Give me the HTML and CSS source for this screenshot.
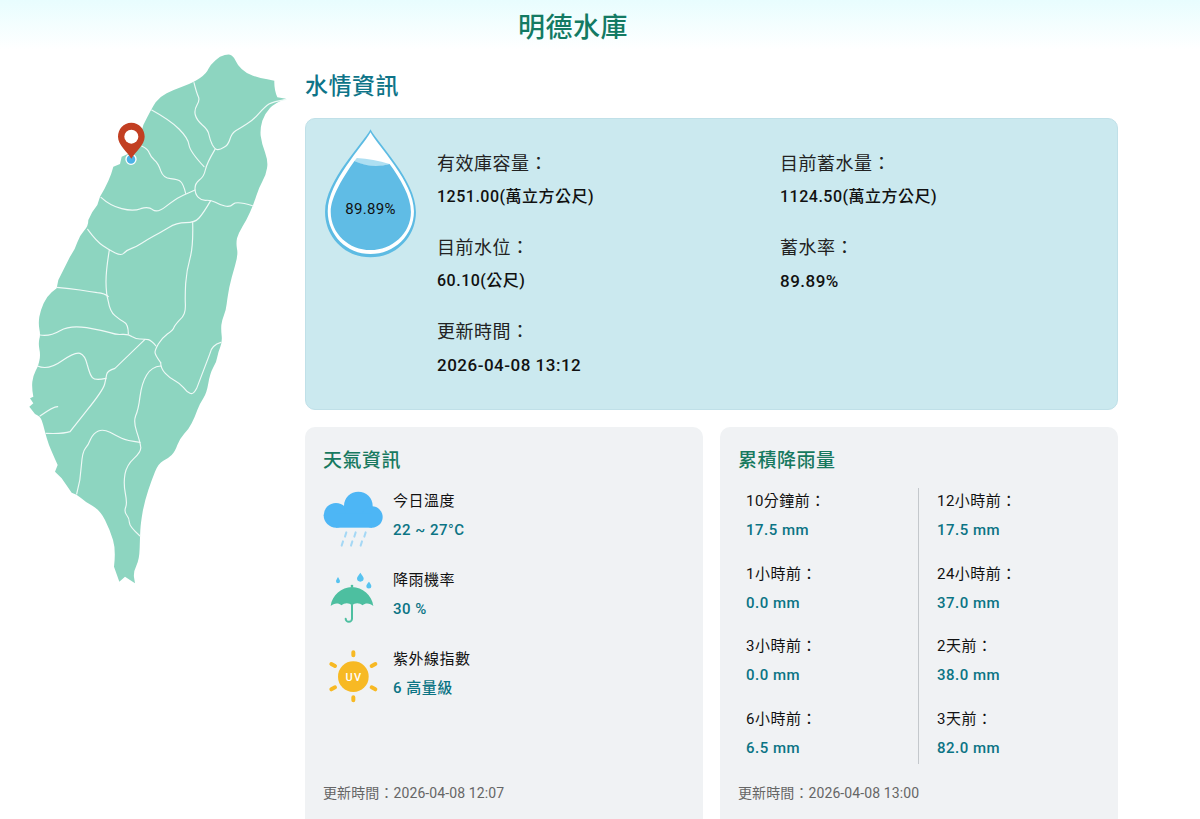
FILE: index.html
```html
<!DOCTYPE html>
<html lang="zh-Hant">
<head>
    <meta charset="UTF-8">
    <meta name="viewport" content="width=device-width, initial-scale=1.0">
    <title>明德水庫</title>
    <link rel="stylesheet" href="styles.css">
</head>
<body>
    <header class="page-header">
        <h1>明德水庫</h1>
    </header>

    <main class="layout">
        <div class="map-col">
            <svg class="map" viewBox="0 24 840 1650" aria-label="台灣地圖">
                <path class="map-land" d="M600 50 Q620 42 630 44 Q640 47 646 61 Q652 75 665 87 Q678 100 699 107 Q720 115 742 118 L763 122 Q762 150 772 172 L798 176 Q765 188 750 204 Q735 220 727 242 Q720 265 722 287 Q725 310 735 337 Q745 365 741 385 Q738 405 728 422 Q718 440 709 467 Q700 495 690 517 Q680 540 667 560 Q655 580 651 595 Q648 610 651 627 Q655 645 645 677 Q635 710 628 742 Q622 775 620 792 Q618 810 612 825 Q606 840 604 855 Q603 870 605 887 Q607 905 601 920 Q595 935 592 950 Q590 965 580 982 Q570 1000 565 1030 Q560 1060 550 1075 Q540 1090 532 1110 Q525 1130 515 1150 Q505 1170 492 1182 Q480 1195 472 1215 Q465 1235 455 1245 Q445 1255 430 1262 Q415 1270 405 1295 Q395 1320 385 1350 Q375 1380 368 1415 Q362 1450 361 1470 Q360 1490 359 1525 Q358 1560 349 1577 Q340 1595 342 1612 L345 1630 L315 1610 L298 1625 L282 1580 Q288 1530 279 1500 Q270 1470 255 1440 Q240 1410 217 1397 Q195 1385 182 1373 Q170 1362 155 1358 L125 1315 L105 1295 L113 1275 Q95 1235 87 1215 Q80 1195 75 1175 Q70 1155 65 1141 Q60 1128 45 1122 L28 1100 L40 1090 L30 1075 L40 1070 Q35 1045 37 1025 Q40 1005 47 992 Q55 980 58 962 Q62 945 58 927 Q55 910 58 897 Q62 885 58 867 Q55 850 58 830 Q62 810 71 790 Q80 770 95 757 L110 745 L115 720 L150 650 Q165 630 172 607 Q180 585 192 572 Q205 560 205 540 Q215 515 232 495 L240 470 Q270 420 280 380 L300 372 L305 350 L350 330 L370 255 Q395 205 407 187 Q420 170 440 160 Q460 150 490 139 Q520 128 540 114 Q560 100 565 87 Q570 75 585 62 Q592 56 600 50 Z"/>
                <g class="map-lines">
                    <path d="M522 128 Q530 160 535 170 Q540 180 531 195 Q522 210 526 225 Q530 240 547 255 Q565 270 567 285 Q570 300 577 314 Q585 328 592 329 Q600 330 612 322 Q625 315 630 297 Q635 280 647 272 Q660 265 680 252 Q700 240 717 220 Q735 200 747 192 Q760 185 798 178"/>
                    <path d="M395 210 Q450 240 477 267 Q505 295 507 315 Q510 335 552 380"/>
                    <path d="M585 328 Q560 370 556 390 Q552 410 538 420 Q525 430 525 446 Q525 462 535 472 Q545 482 558 481 Q572 480 586 487 Q600 495 615 498 Q630 502 640 492 Q650 482 700 498"/>
                    <path d="M365 318 Q385 328 388 339 Q392 350 403 360 Q415 370 422 392 Q430 415 452 416 Q475 418 482 425 Q490 432 497 460"/>
                    <path d="M243 472 Q270 497 305 506 Q340 515 362 506 Q385 498 398 509 Q412 520 438 499 Q465 478 481 470 Q497 462 525 450"/>
                    <path d="M572 482 Q550 520 537 534 Q525 548 497 548 Q470 548 445 563 Q420 578 400 589 Q380 600 365 610 Q350 620 335 625 Q320 630 312 639 Q305 648 286 639 Q268 630 249 617 Q230 605 203 568"/>
                    <path d="M518 548 Q520 620 510 655 Q500 690 497 730 Q495 770 496 790 Q497 810 493 820 Q490 830 477 842 Q465 855 462 862 Q460 870 442 882 Q425 895 415 912 Q405 930 405 937 Q405 945 422 968"/>
                    <path d="M268 630 Q258 690 258 725 Q258 760 265 785 Q270 815 285 827 Q300 840 312 846 Q325 852 325 882"/>
                    <path d="M110 742 Q150 745 180 750 Q210 755 232 758 Q255 760 265 770"/>
                    <path d="M60 885 Q90 890 120 872 Q150 855 200 863 Q250 872 270 878 Q290 885 307 883 Q325 882 337 890 Q350 898 362 897 Q375 897 385 899 Q395 902 408 918"/>
                    <path d="M375 898 L285 985 Q262 992 260 1003 Q258 1015 254 1032 Q250 1050 200 1112 L150 1175 Q130 1182 78 1180"/>
                    <path d="M52 978 Q85 992 125 963 Q165 935 180 940 Q195 945 202 975 Q210 1005 217 1013 Q225 1022 258 1015"/>
                    <path d="M60 1128 Q100 1100 113 1100"/>
                    <path d="M422 978 Q395 980 380 1005 Q365 1030 360 1070 Q355 1110 347 1127 Q340 1145 350 1175 Q360 1205 362 1220 Q365 1235 342 1255 Q320 1275 315 1302 Q310 1330 316 1360 Q322 1390 317 1402 Q312 1415 320 1425 Q328 1435 328 1447 Q328 1460 360 1488"/>
                    <path d="M422 968 Q422 985 436 1000 Q450 1015 465 1022 Q480 1030 490 1042 Q500 1055 510 1060 Q520 1065 530 1045 L570 940 Q575 915 603 907"/>
                    <path d="M360 1207 Q320 1202 305 1195 Q290 1188 270 1177 Q250 1167 235 1173 Q220 1180 212 1197 Q205 1215 196 1225 Q187 1235 184 1277 Q182 1320 170 1362"/>
                </g>
                <circle class="pin-dot" cx="333" cy="358" r="15"/>
                <path class="pin" d="M334 248 C310 248 294 268 294 290 C294 315 322 335 334 356 C346 335 374 315 374 290 C374 268 358 248 334 248 Z"/>
                <circle class="pin-hole" cx="334" cy="290" r="21"/>
            </svg>
        </div>

        <div class="content-col">
            <h2 class="section-title">水情資訊</h2>
            <section class="water-card">
                <div class="drop">
                    <svg class="drop-svg" viewBox="72 62 278 386">
                        <path fill="#5dbbe3" d="M211 63 C190 105 75 215 75 310 C75 385 135 446 211 446 C287 446 347 385 347 310 C347 215 232 105 211 63 Z"/>
                        <path fill="#fff" d="M211 72 C190 112 83 220 83 308 C83 380 140 436 211 436 C282 436 341 380 341 308 C341 220 232 112 211 72 Z"/>
                        <path fill="#aedff2" d="M163 158 L170 149 Q220 152 268 167 Q215 185 163 158 Z"/>
                        <path fill="#60bce5" d="M163 158 Q215 182 268 167 C300 210 332 265 332 310 C332 375 275 424 211 424 C147 424 92 375 92 310 C92 265 130 205 163 158 Z"/>
                    </svg>
                    <span class="drop-text">89.89%</span>
                </div>
                <div class="water-stats">
                    <div class="stat">
                        <div class="stat-label">有效庫容量：</div>
                        <div class="stat-value">1251.00(萬立方公尺)</div>
                    </div>
                    <div class="stat">
                        <div class="stat-label">目前蓄水量：</div>
                        <div class="stat-value">1124.50(萬立方公尺)</div>
                    </div>
                    <div class="stat">
                        <div class="stat-label">目前水位：</div>
                        <div class="stat-value">60.10(公尺)</div>
                    </div>
                    <div class="stat">
                        <div class="stat-label">蓄水率：</div>
                        <div class="stat-value stat-value-plain">89.89%</div>
                    </div>
                    <div class="stat">
                        <div class="stat-label">更新時間：</div>
                        <div class="stat-value stat-value-plain">2026-04-08 13:12</div>
                    </div>
                </div>
            </section>

            <div class="bottom-cards">
                <section class="info-card">
                    <h3>天氣資訊</h3>
                    <div class="info-body weather-list">
                        <div class="weather-item">
                            <svg class="weather-icon" viewBox="39 21 180 174">
                                <g fill="#4db6f5">
                                    <circle cx="78" cy="106" r="37"/>
                                    <circle cx="145" cy="78" r="43"/>
                                    <circle cx="186" cy="111" r="32"/>
                                    <rect x="78" y="100" width="108" height="43"/>
                                </g>
                                <g class="rain-drops">
                                    <path d="M109 157 L105 170 M137 157 L133 170 M167 157 L163 170 M99 184 L95 197 M127 184 L123 197 M156 184 L152 197"/>
                                </g>
                            </svg>
                            <div class="weather-text">
                                <div class="item-label">今日溫度</div>
                                <div class="item-value">22 ~ 27°C</div>
                            </div>
                        </div>
                        <div class="weather-item">
                            <svg class="weather-icon" viewBox="39 258 180 174">
                                <g fill="#57c3f0">
                                    <path d="M84 291 C88 298 90 301 90 304 A6 6 0 0 1 78 304 C78 301 80 298 84 291 Z"/>
                                    <path d="M151 278 C157 287 161 291 161 295 A10 10 0 0 1 141 295 C141 291 145 287 151 278 Z"/>
                                    <path d="M177 305 C181 311 184 314 184 318 A7.500 7.500 0 0 1 169 318 C169 314 172 311 177 305 Z"/>
                                </g>
                                <path fill="#4dbfa0" d="M62 378 C66 345 95 322 126 321 C157 322 186 345 190 378 C180 368 165 368 158 376 C148 368 135 368 126 376 C117 368 104 368 94 376 C87 368 72 368 62 378 Z"/>
                                <circle fill="#4dbfa0" cx="126" cy="318" r="4"/>
                                <path class="umbrella-handle" d="M126 376 V416 A9.500 9.500 0 0 1 107 416"/>
                            </svg>
                            <div class="weather-text">
                                <div class="item-label">降雨機率</div>
                                <div class="item-value">30 %</div>
                            </div>
                        </div>
                        <div class="weather-item">
                            <svg class="weather-icon" viewBox="39 495 180 174">
                                <circle fill="#f7b924" cx="130" cy="590" r="46"/>
                                <path class="sun-rays" d="M130 517 V526 M130 652 V661 M64 552 L75 558 M196 552 L185 558 M64 628 L75 622 M196 628 L185 622"/>
                                <text class="uv-text" x="132" y="602">UV</text>
                            </svg>
                            <div class="weather-text">
                                <div class="item-label">紫外線指數</div>
                                <div class="item-value">6 高量級</div>
                            </div>
                        </div>
                    </div>
                    <div class="update-time">更新時間：2026-04-08 12:07</div>
                </section>

                <section class="info-card">
                    <h3>累積降雨量</h3>
                    <div class="info-body rain-grid">
                        <div class="rain-col">
                            <div class="rain-item">
                                <div class="item-label">10分鐘前：</div>
                                <div class="item-value">17.5 mm</div>
                            </div>
                            <div class="rain-item">
                                <div class="item-label">1小時前：</div>
                                <div class="item-value">0.0 mm</div>
                            </div>
                            <div class="rain-item">
                                <div class="item-label">3小時前：</div>
                                <div class="item-value">0.0 mm</div>
                            </div>
                            <div class="rain-item">
                                <div class="item-label">6小時前：</div>
                                <div class="item-value">6.5 mm</div>
                            </div>
                        </div>
                        <div class="rain-col">
                            <div class="rain-item">
                                <div class="item-label">12小時前：</div>
                                <div class="item-value">17.5 mm</div>
                            </div>
                            <div class="rain-item">
                                <div class="item-label">24小時前：</div>
                                <div class="item-value">37.0 mm</div>
                            </div>
                            <div class="rain-item">
                                <div class="item-label">2天前：</div>
                                <div class="item-value">38.0 mm</div>
                            </div>
                            <div class="rain-item">
                                <div class="item-label">3天前：</div>
                                <div class="item-value">82.0 mm</div>
                            </div>
                        </div>
                    </div>
                    <div class="update-time">更新時間：2026-04-08 13:00</div>
                </section>
            </div>
        </div>
    </main>
</body>
</html>
```

FILE: styles.css
```css
/* General Styles */
body {
    margin: 0;
    font-family: Roboto, "Noto Sans CJK TC", sans-serif;
    letter-spacing: 0.5px;
    color: #111;
    background: linear-gradient(#e8fdfe, #fff 50px) no-repeat #fff;
}

.page-header {
    width: 1086px;
    margin-left: 30px;
    padding-top: 9px;
    height: 39px;
    text-align: center;
}

h1 {
    margin: 0;
    font-size: 27px;
    font-weight: 500;
    line-height: 39px;
    color: #137a63;
}

.layout {
    display: flex;
    width: 1098px;
    margin-left: 20px;
}

.map-col {
    width: 285px;
    flex-shrink: 0;
}

.map {
    display: block;
    width: 280px;
    height: 550px;
}

.map-land {
    fill: #8dd5c0;
}

.map-lines path {
    fill: none;
    stroke: #eef9f6;
    stroke-width: 3.5;
    stroke-linecap: round;
}

.pin {
    fill: #c23f22;
}

.pin-hole {
    fill: #fff;
}

.pin-dot {
    fill: #4db2e6;
    stroke: #fff;
    stroke-width: 4;
}

.content-col {
    width: 813px;
    flex-shrink: 0;
    padding-top: 20px;
}

.section-title {
    margin: 0 0 12px;
    font-size: 23px;
    font-weight: 500;
    line-height: 38px;
    color: #0e7488;
}

/* Water card */
.water-card {
    display: flex;
    height: 292px;
    box-sizing: border-box;
    background: #cbe9ef;
    border: 1px solid #c0e0e8;
    border-radius: 10px;
    padding: 10px 0 0 18px;
}

.drop {
    position: relative;
    width: 93px;
    height: 129px;
    flex-shrink: 0;
}

.drop-svg {
    display: block;
    width: 93px;
    height: 129px;
}

.drop-text {
    position: absolute;
    left: 0;
    right: 0;
    top: 70px;
    text-align: center;
    font-size: 15px;
    line-height: 20px;
    letter-spacing: 0.3px;
}

.water-stats {
    display: grid;
    grid-template-columns: 343px 343px;
    grid-auto-rows: 84px;
    margin-left: 20px;
    padding-top: 18px;
}

.stat-label {
    font-size: 18px;
    line-height: 34px;
    color: #222;
}

.stat-value {
    font-size: 16px;
    font-weight: 500;
    line-height: 32px;
}

.stat-value-plain {
    font-size: 17px;
}

/* Bottom cards */
.bottom-cards {
    display: grid;
    grid-template-columns: 398px 398px;
    gap: 17px;
    margin-top: 17px;
}

.info-card {
    display: flex;
    flex-direction: column;
    height: 403px;
    box-sizing: border-box;
    background: #f0f2f4;
    border-radius: 10px;
    padding: 19px 17px 26px 18px;
}

h3 {
    margin: 0 0 11px;
    font-size: 19px;
    font-weight: 500;
    line-height: 30px;
    color: #17795f;
}

.info-body {
    flex: 1;
}

.item-label {
    font-size: 15px;
    line-height: 28px;
    color: #111;
}

.item-value {
    font-size: 15px;
    font-weight: 500;
    line-height: 30px;
    color: #0b7484;
}

.weather-list {
    display: flex;
    flex-direction: column;
    gap: 21px;
}

.weather-item {
    display: flex;
    gap: 10px;
    height: 58px;
}

.weather-icon {
    width: 60px;
    height: 58px;
    flex-shrink: 0;
    overflow: visible;
}

.rain-drops path {
    fill: none;
    stroke: #a5d8f5;
    stroke-width: 6;
    stroke-linecap: round;
}

.umbrella-handle {
    fill: none;
    stroke: #4dbfa0;
    stroke-width: 6;
    stroke-linecap: round;
}

.sun-rays {
    fill: none;
    stroke: #f7b924;
    stroke-width: 12;
    stroke-linecap: round;
}

.uv-text {
    font-size: 33px;
    font-weight: 500;
    letter-spacing: 4px;
    fill: #fff;
    text-anchor: middle;
}

.rain-grid {
    display: grid;
    grid-template-columns: 180px 1fr;
    height: 276px;
    flex: none;
    margin: 1px 0 auto;
}

.rain-col {
    display: flex;
    flex-direction: column;
    gap: 14.670px;
    padding-left: 8px;
}

.rain-col + .rain-col {
    padding-left: 18px;
    border-left: 1px solid #c4c8cc;
}

.rain-item {
    height: 58px;
}

.rain-item .item-label {
    line-height: 27px;
}

.rain-item .item-value {
    line-height: 31px;
}

.update-time {
    font-size: 14px;
    line-height: 22px;
    letter-spacing: 0.1px;
    color: #666;
}
```
